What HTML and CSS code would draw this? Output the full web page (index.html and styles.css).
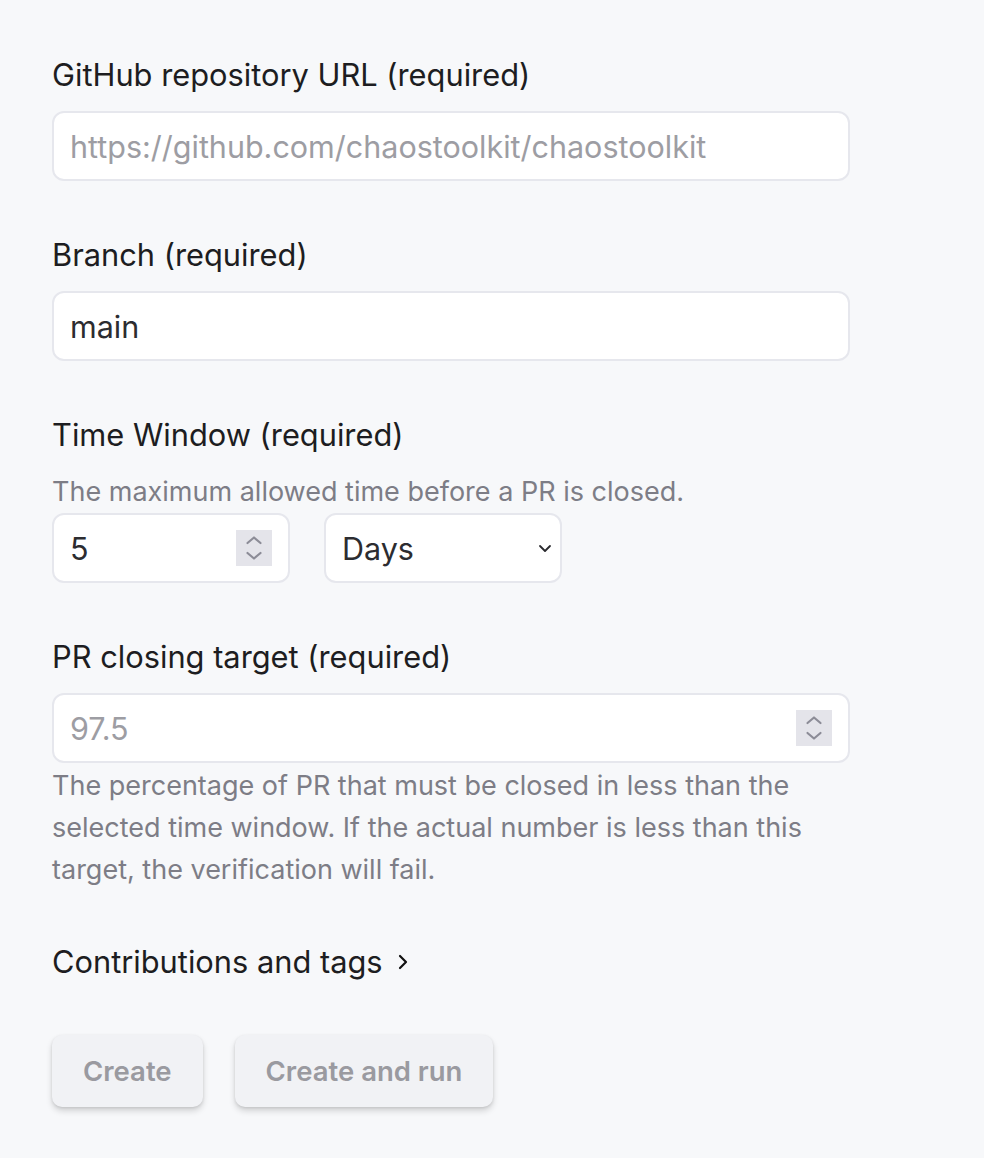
FILE: index.html
```html
<!DOCTYPE html>
<html lang="en">
<head>
<meta charset="utf-8">
<title>Verification form</title>
<link rel="stylesheet" href="styles.css">
</head>
<body>
<form class="form">
  <div class="field">
    <label class="label" for="repo">GitHub repository URL (required)</label>
    <input class="input" id="repo" type="text" placeholder="https://github.com/chaostoolkit/chaostoolkit">
  </div>
  <div class="field">
    <label class="label" for="branch">Branch (required)</label>
    <input class="input" id="branch" type="text" value="main">
  </div>
  <div class="field">
    <label class="label" for="window">Time Window (required)</label>
    <p class="help">The maximum allowed time before a PR is closed.</p>
    <div class="row">
      <div class="box box-small">
        <span class="value">5</span>
        <span class="spinner"><svg viewBox="0 0 36 36" width="36" height="36"><path d="M11.5 13 L18 7.5 L24.5 13 M11.5 23 L18 28.5 L24.5 23" fill="none" stroke="#8c8c97" stroke-width="2.2" stroke-linecap="round" stroke-linejoin="round"/></svg></span>
      </div>
      <div class="box box-select">
        <span class="value">Days</span>
        <svg class="caret" viewBox="0 0 14 9" width="14" height="9"><path d="M2 2 L7 7 L12 2" fill="none" stroke="#2a2a2e" stroke-width="1.8" stroke-linecap="round" stroke-linejoin="round"/></svg>
      </div>
    </div>
  </div>
  <div class="field field-target">
    <label class="label" for="target">PR closing target (required)</label>
    <div class="box box-wide">
      <span class="value placeholder">97.5</span>
      <span class="spinner"><svg viewBox="0 0 36 36" width="36" height="36"><path d="M11.5 13 L18 7.5 L24.5 13 M11.5 23 L18 28.5 L24.5 23" fill="none" stroke="#8c8c97" stroke-width="2.2" stroke-linecap="round" stroke-linejoin="round"/></svg></span>
    </div>
    <p class="help help-bottom">The percentage of PR that must be closed in less than the selected time window. If the actual number is less than this target, the verification will fail.</p>
  </div>
  <div class="toggle">
    <span>Contributions and tags</span>
    <svg class="chev" viewBox="0 0 12 18" width="12" height="18"><path d="M3 3 L9 9 L3 15" fill="none" stroke="#111" stroke-width="2.2" stroke-linecap="round" stroke-linejoin="round"/></svg>
  </div>
  <div class="actions">
    <button class="btn" type="button">Create</button>
    <button class="btn" type="button">Create and run</button>
  </div>
</form>
</body>
</html>
```

FILE: styles.css
```css
* { box-sizing: border-box; }
html, body { margin: 0; padding: 0; }
body {
  background: #f7f8fa;
  font-family: Inter, "Noto Sans", sans-serif;
  color: #1d1d21;
  width: 984px;
  height: 1158px;
  overflow: hidden;
}
.form {
  padding: 55px 0 0 52px;
  width: 850px;
  display: flex;
  flex-direction: column;
}
.field {
  display: flex;
  flex-direction: column;
  margin-bottom: 54px;
}
.label {
  font-size: 30.8px;
  line-height: 40px;
  margin-bottom: 16px;
  color: #1d1d21;
}
.input, .box {
  height: 70px;
  border: 2px solid #e6e7ed;
  border-radius: 12px;
  background: #fff;
  font-family: Inter, "Noto Sans", sans-serif;
  font-size: 30.5px;
  color: #2c2c30;
  padding: 0 16px;
  outline: none;
}
.input { width: 798px; }
.input::placeholder { color: #9d9da3; }
.help {
  margin: 0;
  font-size: 27px;
  line-height: 42px;
  color: #7d7d86;
}
.row {
  display: flex;
  gap: 34px;
}
.box {
  display: flex;
  align-items: center;
  justify-content: space-between;
}
.box-small { width: 238px; padding-right: 16px; }
.box-select { width: 238px; padding-right: 8px; }
.box-wide { width: 798px; }
.value { font-size: 30.5px; color: #2c2c30; }
.placeholder { color: #9d9da3; }
.spinner {
  width: 36px;
  height: 36px;
  background: #e4e4ea;
  display: flex;
}
.spinner svg { width: 36px; height: 36px; display: block; }
.field-target { margin-bottom: 51px; }
.help-bottom { margin-top: 2px; width: 790px; }
.toggle {
  display: flex;
  align-items: center;
  gap: 14px;
  font-size: 30.8px;
  line-height: 40px;
  color: #1d1d21;
}
.actions {
  display: flex;
  gap: 32px;
  margin-top: 53px;
}
.btn {
  height: 72px;
  padding: 0 31px;
  border: none;
  border-radius: 10px;
  background: #f1f2f5;
  color: #9a9aa0;
  font-family: Inter, "Noto Sans", sans-serif;
  font-size: 27.5px;
  font-weight: 600;
  box-shadow: 0 4px 6px rgba(0,0,0,0.15), 0 1px 3px rgba(0,0,0,0.1);
}
```
